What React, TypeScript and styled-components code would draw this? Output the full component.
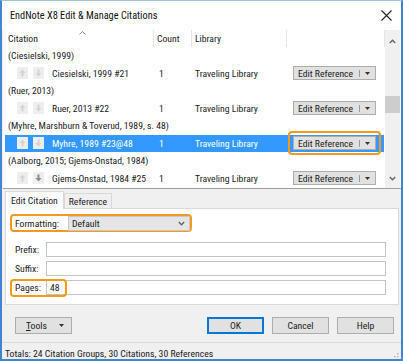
import React from 'react';
import styled, { createGlobalStyle } from 'styled-components';

const GlobalStyle = createGlobalStyle`
  html, body {
    margin: 0;
    padding: 0;
    background: #ffffff;
  }
  * {
    box-sizing: border-box;
  }
`;

const ORANGE = '#f29a1f';

interface ICitation {
  group: string;
  item: string;
  count: number;
  library: string;
  selected?: boolean;
  downActive?: boolean;
}

const citations: ICitation[] = [
  { group: '(Ciesielski, 1999)', item: 'Ciesielski, 1999 #21', count: 1, library: 'Traveling Library' },
  { group: '(Ruer, 2013)', item: 'Ruer, 2013 #22', count: 1, library: 'Traveling Library' },
  {
    group: '(Myhre, Marshburn & Toverud, 1989, s. 48)',
    item: 'Myhre, 1989 #23@48',
    count: 1,
    library: 'Traveling Library',
    selected: true,
  },
  {
    group: '(Aalborg, 2015; Gjems-Onstad, 1984)',
    item: 'Gjems-Onstad, 1984 #25',
    count: 1,
    library: 'Traveling Library',
    downActive: true,
  },
];

const Window = styled.div`
  width: 403px;
  height: 361px;
  display: flex;
  flex-direction: column;
  background: #f0f0f0;
  border: 2px solid #3f86cf;
  border-top: 1px solid #9fc2e6;
  font-family: Roboto, 'Liberation Sans', sans-serif;
  font-stretch: condensed;
  font-size: 9.7px;
  color: #1b1b1b;
  white-space: nowrap;
  overflow: hidden;
`;
const TitleBar = styled.div`
  height: 29px;
  display: flex;
  align-items: center;
  justify-content: space-between;
  background: #ffffff;
  padding: 0 9px 0 8px;
  flex-shrink: 0;
`;
const Title = styled.span`
  font-size: 10.3px;
  color: #111;
`;
const CloseIcon = styled.svg`
  width: 11px;
  height: 11px;
`;
const ListPane = styled.div`
  display: flex;
  height: 159px;
  background: #ffffff;
  margin: 0 0 0 1px;
  border-bottom: 1px solid #a0a0a0;
  flex-shrink: 0;
`;
const ListBody = styled.div`
  flex: 1;
  display: flex;
  flex-direction: column;
  padding-left: 2px;
`;
const COLUMNS = '149px 38px 95px 1fr';
const HeaderRow = styled.div`
  display: grid;
  grid-template-columns: ${COLUMNS};
  height: 17px;
  position: relative;
`;
const HeaderCell = styled.div`
  display: flex;
  align-items: center;
  padding-left: 3px;
  border-right: 1px solid #e5e5e5;
`;
const SortCaret = styled.svg`
  position: absolute;
  left: 74px;
  top: 1px;
  width: 7px;
  height: 4px;
`;
const Row = styled.div<{ $selected?: boolean }>`
  height: 17.5px;
  display: flex;
  align-items: center;
  background: ${(p) => (p.$selected ? '#3399ff' : 'transparent')};
  color: ${(p) => (p.$selected ? '#ffffff' : '#1b1b1b')};
  margin-right: 1px;
`;
const GroupRow = styled(Row)`
  padding-left: 3px;
`;
const ItemRow = styled(Row)`
  display: grid;
  grid-template-columns: ${COLUMNS};
`;
const ItemCell = styled.div`
  display: flex;
  align-items: center;
  gap: 4px;
  padding-left: 12px;
`;
const CountCell = styled.div`
  padding-left: 5px;
`;
const LibCell = styled.div`
  padding-left: 3px;
`;
const ArrowBtn = styled.span<{ $active?: boolean }>`
  width: 11px;
  height: 12px;
  display: inline-flex;
  align-items: center;
  justify-content: center;
  background: #eeeeee;
  color: ${(p) => (p.$active ? '#8a8a8a' : '#d4d4d4')};
`;
const ArrowPair = styled.span`
  display: inline-flex;
  gap: 5px;
  margin-right: 4px;
`;
const BtnCell = styled.div`
  display: flex;
  align-items: center;
  padding-left: 6px;
`;
const FocusRing = styled.span<{ $on?: boolean }>`
  display: inline-flex;
  padding: 3px 3px;
  margin: -5px -5px;
  border: 2px solid ${(p) => (p.$on ? ORANGE : 'transparent')};
  border-radius: 4px;
`;
const EditRefBtn = styled.span`
  width: 83px;
  height: 14px;
  display: inline-flex;
  align-items: center;
  background: #e1e1e1;
  border: 1px solid #adadad;
  color: #1b1b1b;
  padding: 0 5px 0 4px;
`;
const SplitBar = styled.span`
  width: 1px;
  height: 7px;
  background: #9a9a9a;
  margin: 0 5px 0 auto;
`;
const Scrollbar = styled.div`
  width: 15px;
  display: flex;
  flex-direction: column;
  align-items: center;
  justify-content: space-between;
  background: #f0f0f0;
  padding: 9px 0 7px;
  margin-right: 1px;
`;
const ScrollTrack = styled.div`
  flex: 1;
  width: 100%;
  padding-top: 52px;
`;
const Thumb = styled.div`
  width: 100%;
  height: 17px;
  background: #cdcdcd;
`;
const Lower = styled.div`
  flex: 1;
  display: flex;
  flex-direction: column;
  padding: 2px 2px 0 3px;
`;
const Tabs = styled.div`
  display: flex;
  align-items: flex-end;
  height: 17px;
`;
const Tab = styled.div<{ $active?: boolean }>`
  height: ${(p) => (p.$active ? '18px' : '15px')};
  padding: ${(p) => (p.$active ? '0 5px 0 5px' : '0 4px')};
  display: flex;
  align-items: center;
  background: ${(p) => (p.$active ? '#ffffff' : '#f0f0f0')};
  border: 1px solid #d9d9d9;
  border-bottom: none;
  margin-bottom: ${(p) => (p.$active ? '-1px' : '0')};
  position: relative;
  z-index: ${(p) => (p.$active ? 1 : 0)};
`;
const TabPanel = styled.div`
  height: 97px;
  background: #ffffff;
  border: 1px solid #d9d9d9;
  display: flex;
  flex-direction: column;
  padding: 5px 12px 0 4px;
`;
const FieldRow = styled.div`
  display: flex;
  align-items: center;
  height: 19px;
`;
const FormatRow = styled(FieldRow)`
  height: 18px;
  margin-bottom: 8px;
`;
const Highlight = styled.div<{ $on?: boolean; $width: number }>`
  display: flex;
  align-items: center;
  width: ${(p) => p.$width}px;
  height: 18px;
  padding-left: 3px;
  border: 2px solid ${(p) => (p.$on ? ORANGE : 'transparent')};
  border-radius: 4px;
  flex-shrink: 0;
  position: relative;
  z-index: 1;
`;
const Label = styled.span`
  width: 31px;
  flex-shrink: 0;
`;
const FormatLabel = styled.span`
  width: 53px;
  flex-shrink: 0;
`;
const Select = styled.div`
  width: 122px;
  height: 15px;
  display: flex;
  align-items: center;
  justify-content: space-between;
  padding: 0 4px 0 3px;
  background: #e5e5e5;
  border: 1px solid #c8c8c8;
`;
const TextInput = styled.div`
  flex: 1;
  height: 15px;
  display: flex;
  align-items: center;
  padding-left: 3px;
  border: 1px solid #c4c4c4;
  background: #ffffff;
`;
const PagesInput = styled(TextInput)`
  margin-left: -21px;
`;
const ButtonRow = styled.div`
  display: flex;
  align-items: center;
  padding: 0 5px 0 10px;
  height: 33px;
  margin-top: 4px;
`;
const Button = styled.div<{ $default?: boolean }>`
  width: 57px;
  height: 17px;
  display: flex;
  align-items: center;
  justify-content: center;
  background: #e1e1e1;
  border: 1px solid ${(p) => (p.$default ? '#0078d7' : '#adadad')};
  box-shadow: ${(p) => (p.$default ? 'inset 0 0 0 1px #0078d7' : 'none')};
`;
const ToolsButton = styled(Button)`
  justify-content: space-between;
  padding: 0 7px 0 10px;
  margin-right: auto;
`;
const ActionGroup = styled.div`
  display: flex;
  gap: 8px;
`;
const Underline = styled.span`
  text-decoration: underline;
`;
const StatusBar = styled.div`
  height: 21px;
  margin: 0 -2px 0 -3px;
  border-top: 1px solid #dadada;
  display: flex;
  align-items: center;
  justify-content: space-between;
  padding: 0 2px 0 3px;
`;
const Grip = styled.svg`
  width: 8px;
  height: 8px;
  align-self: flex-end;
  margin-bottom: 2px;
`;

const Arrow: React.FC<{ up?: boolean }> = ({ up }) => (
  <svg width="7" height="8" viewBox="0 0 7 8">
    {up ? (
      <path d="M3.5 0.5 L6.5 4 H4.5 V7.5 H2.5 V4 H0.5 Z" fill="currentColor" />
    ) : (
      <path d="M3.5 7.5 L6.5 4 H4.5 V0.5 H2.5 V4 H0.5 Z" fill="currentColor" />
    )}
  </svg>
);

const Chevron: React.FC<{ up?: boolean }> = ({ up }) => (
  <svg width="7" height="5" viewBox="0 0 7 5">
    <path
      d={up ? 'M0.8 4 L3.5 1.2 L6.2 4' : 'M0.8 1 L3.5 3.8 L6.2 1'}
      fill="none"
      stroke="#606060"
      strokeWidth="1.3"
    />
  </svg>
);

const DropCaret: React.FC = () => (
  <svg width="5" height="3" viewBox="0 0 5 3">
    <path d="M0 0 H5 L2.5 3 Z" fill="#333" />
  </svg>
);

const App: React.FC = () => {
  return (
    <>
      <GlobalStyle />
      <Window>
        <TitleBar>
          <Title>EndNote X8 Edit &amp; Manage Citations</Title>
          <CloseIcon viewBox="0 0 11 11">
            <path d="M0.5 0.5 L10.5 10.5 M10.5 0.5 L0.5 10.5" stroke="#222" strokeWidth="1.1" />
          </CloseIcon>
        </TitleBar>
        <ListPane>
          <ListBody>
            <HeaderRow>
              <HeaderCell>Citation</HeaderCell>
              <HeaderCell>Count</HeaderCell>
              <HeaderCell>Library</HeaderCell>
              <HeaderCell />
              <SortCaret viewBox="0 0 7 4">
                <path d="M0.5 3.5 L3.5 0.5 L6.5 3.5" fill="none" stroke="#8a8a8a" strokeWidth="1" />
              </SortCaret>
            </HeaderRow>
            {citations.map((c) => (
              <React.Fragment key={c.item}>
                <GroupRow>{c.group}</GroupRow>
                <ItemRow $selected={c.selected}>
                  <ItemCell>
                    <ArrowPair>
                      <ArrowBtn>
                        <Arrow up />
                      </ArrowBtn>
                      <ArrowBtn $active={c.downActive}>
                        <Arrow />
                      </ArrowBtn>
                    </ArrowPair>
                    {c.item}
                  </ItemCell>
                  <CountCell>{c.count}</CountCell>
                  <LibCell>{c.library}</LibCell>
                  <BtnCell>
                    <FocusRing $on={c.selected}>
                      <EditRefBtn>
                        Edit Reference
                        <SplitBar />
                        <DropCaret />
                      </EditRefBtn>
                    </FocusRing>
                  </BtnCell>
                </ItemRow>
              </React.Fragment>
            ))}
          </ListBody>
          <Scrollbar>
            <Chevron up />
            <ScrollTrack>
              <Thumb />
            </ScrollTrack>
            <Chevron />
          </Scrollbar>
        </ListPane>
        <Lower>
          <Tabs>
            <Tab $active>Edit Citation</Tab>
            <Tab>Reference</Tab>
          </Tabs>
          <TabPanel>
            <FormatRow>
              <Highlight $on $width={182}>
                <FormatLabel>Formatting:</FormatLabel>
                <Select>
                  Default
                  <Chevron />
                </Select>
              </Highlight>
            </FormatRow>
            <FieldRow>
              <Highlight $width={36}>
                <Label>Prefix:</Label>
              </Highlight>
              <TextInput />
            </FieldRow>
            <FieldRow>
              <Highlight $width={36}>
                <Label>Suffix:</Label>
              </Highlight>
              <TextInput />
            </FieldRow>
            <FieldRow>
              <Highlight $on $width={57}>
                <Label>Pages:</Label>
              </Highlight>
              <PagesInput>48</PagesInput>
            </FieldRow>
          </TabPanel>
          <ButtonRow>
            <ToolsButton>
              <span>
                <Underline>T</Underline>ools
              </span>
              <DropCaret />
            </ToolsButton>
            <ActionGroup>
              <Button $default>OK</Button>
              <Button>Cancel</Button>
              <Button>Help</Button>
            </ActionGroup>
          </ButtonRow>
          <StatusBar>
            <span>Totals: 24 Citation Groups, 30 Citations, 30 References</span>
            <Grip viewBox="0 0 8 8">
              <g fill="#b5b5b5">
                <rect x="6" y="0" width="1.5" height="1.5" />
                <rect x="3" y="3" width="1.5" height="1.5" />
                <rect x="6" y="3" width="1.5" height="1.5" />
                <rect x="0" y="6" width="1.5" height="1.5" />
                <rect x="3" y="6" width="1.5" height="1.5" />
                <rect x="6" y="6" width="1.5" height="1.5" />
              </g>
            </Grip>
          </StatusBar>
        </Lower>
      </Window>
    </>
  );
};

export default App;
